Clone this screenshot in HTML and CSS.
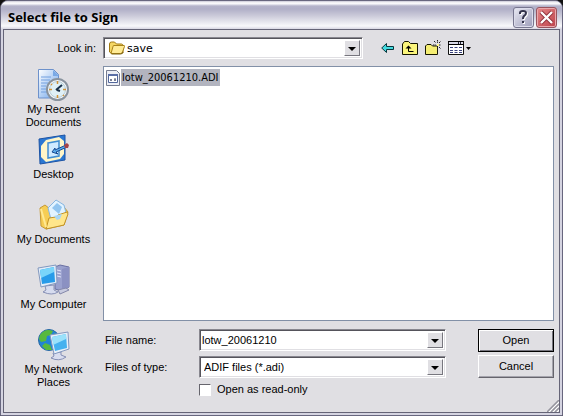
FILE: index.html
```html
<!DOCTYPE html>
<html lang="en">
<head>
<meta charset="utf-8">
<title>Select file to Sign</title>
<link rel="stylesheet" href="styles.css">
</head>
<body>
<div class="window">
  <header class="titlebar">
    <h1>Select file to Sign</h1>
    <button class="caption help" type="button" aria-label="Help">
      <svg width="21" height="21" viewBox="0 0 21 21" fill="none" stroke-width="2"><path d="M8 8V7q0-2 3-2t3 2q0 2-2 3-1 1-1 3M11 15v2" stroke="#fff"/><path d="M7 7V6q0-2 3-2t3 2q0 2-2 3-1 1-1 3M10 14v2" stroke="#34344c"/></svg>
    </button>
    <button class="caption close" type="button" aria-label="Close">
      <svg width="21" height="21" viewBox="0 0 21 21" fill="none"><path d="M5 5l11 11M16 5L5 16" stroke="#8e2f38" stroke-width="4"/><path d="M5 5l11 11M16 5L5 16" stroke="#fff" stroke-width="2.4"/></svg>
    </button>
  </header>
  <form class="dialog">
    <div class="lookrow">
      <label for="look">Look in:</label>
      <div class="combo look">
        <svg class="folder" width="17" height="16" viewBox="0 0 17 16"><path d="M1.5 12V4q0-2 2-2h3l2 2h5q1.500 0 1.500 2v7H3z" fill="#f5d765" stroke="#a17a14"/><path d="M3 13.500L5 6.500q0-1 1-1h10q.8 0 .5 1L14.500 12q-.5 1.500-2 1.500z" fill="#ffeb96" stroke="#aa8218"/><path d="M3.500 14h9q2 0 2.500-2" fill="none" stroke="#7c6312"/></svg>
        <select id="look"><option>save</option></select>
        <span class="arrow"></span>
      </div>
      <div class="tools">
        <button type="button" aria-label="Back"><svg width="14" height="12" viewBox="0 0 14 12"><path d="M.7 6L5.500 1.500V4.500H12.500V7.500H5.500V10.500z" fill="#42dbe0" stroke="#08363c"/></svg></button>
        <button type="button" aria-label="Up one level"><svg width="16" height="14" viewBox="0 0 16 14"><path d="M.5 13.500V3L2.500.5h4L8.500 2.500h7v11z" fill="#fbf57c" stroke="#161600"/><path d="M6.500 6v4.500h5" fill="none" stroke="#000"/><path d="M3.500 7.500L6.500 4.500l3 3z"/></svg></button>
        <button type="button" aria-label="New folder"><svg width="16" height="16" viewBox="0 0 16 16"><path d="M.5 14.500V6L2 4.500h4L7.500 6h5v8.500z" fill="#f5ee73" stroke="#161600"/><path d="M12.500 0v3M12.500 7v3M8 5h3M14 5h2M9 1l2 2M14 3l2-2M14 7l2 2" stroke="#222" stroke-dasharray="1.500 .7"/><path d="M12 4h2v2h-2z" fill="#fff98c"/></svg></button>
        <button type="button" aria-label="View menu"><svg width="24" height="14" viewBox="0 0 24 14"><path d="M.5.500h15v13H.5z" fill="#fff" stroke="#111"/><path d="M0 0h16v1H0zM0 3h16v1H0z"/><path d="M1 1h14v2H1z" fill="#d9d9e6"/><path d="M10 1h1v2h-1zM12 1h1v2h-1z" fill="#223"/><path d="M2 6.500h12M2 9.500h12M2 11.500h12" stroke="#39427c" stroke-dasharray="3 1.500"/><path d="M18 6h5l-2.500 3z"/></svg></button>
      </div>
    </div>
    <div class="main">
      <nav class="places">
        <button type="button"><svg width="32" height="32" viewBox="0 0 32 32"><defs><linearGradient id="page" x2="1" y2="1"><stop stop-color="#fff"/><stop offset="1" stop-color="#6ba3eb"/></linearGradient></defs><path d="M.500.500h15l5 5V29H.500z" fill="url(#page)" stroke="#6d91cb"/><path d="M15 1v6h6z" fill="#79a9e6"/><path d="M3 8h10M3 11h9M3 14h7M3 17h5M3 20h5M3 23h6" stroke="#73a0df"/><circle cx="19.500" cy="20.500" r="10.500" fill="#f5f8fb" stroke="#89939e" stroke-width="2"/><circle cx="19.500" cy="20.500" r="8" fill="#dff0f6" stroke="#b5cbd6"/><path d="M19.500 12v3M19.500 26v3M11 20.500h3M25 20.500h3M13 15l1 1M25 26l1 1" stroke="#d29338" stroke-width="1.500"/><path d="M18 21l6-5M19 21l3 1" stroke="#182f48" stroke-width="2"/></svg><span>My Recent<br>Documents</span></button>
        <button type="button"><svg width="32" height="32" viewBox="0 0 32 32"><path d="M1 5L27 1v25L2 30z" fill="#2b78d3" stroke="#1d54a5"/><path d="M3 12l5-6 13-3 5 4v13l-4 5-14 3-5-5z" fill="#fff6c8"/><path d="M10 9l11-2v15l-11 2z" fill="#cfeaff" stroke="#408dd2" stroke-width="1.500"/><path d="M14 18l3-4v2l11-5 1 2-11 5 2 2z" fill="#5babea" stroke="#164a92"/><path d="M26 11l3-2 2 2-1 3-3 0z" fill="#a54346"/></svg><span>Desktop</span></button>
        <button type="button"><svg width="32" height="32" viewBox="0 0 32 32"><path d="M2 9l5-3 5 4 14-2 4 5-4 13L8 30l-5-3z" fill="#f6cd54" stroke="#c69a35"/><path d="M10 9L18 1l8 5 2 8-14 10z" fill="#e2f3ff" stroke="#86b6e1"/><path d="M14 9l5-5 5 4-3 7z" fill="#91c5f0"/><path d="M8 30L11 19l7-1 2-2 9-3 1 2-4 11z" fill="#ffe68b" stroke="#c39327"/><path d="M16 17l8-2-2 5-3 1z" fill="#a9d6f4"/><path d="M3 10l5 18" stroke="#ffe993" stroke-width="2"/></svg><span>My Documents</span></button>
        <button type="button"><svg width="34" height="32" viewBox="0 0 34 32"><path d="M18 3l5-2 9 2v20l-7 4-7-2z" fill="#9aa1ce" stroke="#696fa2"/><path d="M25 5l7-2v20l-7 4z" fill="#8b91c2"/><path d="M20 6l4 1M20 9l4 1M20 12l4 1" stroke="#e2e5fa"/><path d="M8 22l9-1v5l4 2q-6 4-15 0l3-2z" fill="#d7dcef" stroke="#8790b5"/><path d="M1 4L19 1l1 18L4 23z" fill="#e2edf9" stroke="#8298bf"/><path d="M3 6l14-3 1 15L5 20z" fill="#279be9"/><path d="M3 6l14-3v5L4 14z" fill="#79d5fa"/><path d="M21 26l8-2 3 2-9 4z" fill="#c8cbe0" stroke="#8588aa"/></svg><span>My Computer</span></button>
        <button type="button"><svg width="34" height="32" viewBox="0 0 34 32"><circle cx="12" cy="11" r="10.500" fill="#2183d5" stroke="#2868a2"/><path d="M3 6q5-7 13-4l-2 4-4 1-1 5-5 1-2-3zM8 14l5 2 2 5-6 0-4-4zM17 4l4 4-4 3z" fill="#57b93d"/><path d="M16 24l8-1v3l5 2q-7 5-15 1l3-2z" fill="#d9ddef" stroke="#858fb5"/><path d="M13 6l18-3 1 17-15 5z" fill="#e8f0f9" stroke="#8598bf"/><path d="M15 8l14-3 1 14-12 3z" fill="#45b1ef"/><path d="M15 8l14-3v5l-13 6z" fill="#9ae1fa"/></svg><span>My Network<br>Places</span></button>
      </nav>
      <div class="content">
        <div class="files">
          <button class="file" type="button"><svg width="14" height="16" viewBox="0 0 14 16"><path d="M.5.500h10l3 3v12H.5z" fill="#eceef5" stroke="#777d91"/><path d="M2.500 4.500h9v8h-9z" fill="#fff" stroke="#52679b"/><path d="M2 4h10v2H2z" fill="#5a6ea6"/><path d="M4 10h2M5 9v2M8 10h2M9 8v3" stroke="#4c5572"/></svg><span>lotw_20061210.ADI</span></button>
        </div>
        <div class="bottom">
          <div class="fields">
            <label for="name">File name:</label>
            <div class="combo"><input id="name" type="text" value="lotw_20061210"><button class="arrow" type="button" aria-label="Recent file names"></button></div>
            <label for="type">Files of type:</label>
            <div class="combo type"><select id="type"><option>ADIF files (*.adi)</option></select><span class="arrow"></span></div>
            <label class="readonly"><input type="checkbox">Open as read-only</label>
          </div>
          <div class="actions">
            <button class="push default" type="submit">Open</button>
            <button class="push" type="button">Cancel</button>
          </div>
        </div>
      </div>
    </div>
    <svg class="grip" width="12" height="12" viewBox="0 0 12 12"><path d="M0 12L12 0M4 12l8-8M8 12l4-4" stroke="#95949e" stroke-width="1.500"/><path d="M2 12L12 2M6 12l6-6M10 12l2-2" stroke="#fff"/></svg>
  </form>
</div>
</body>
</html>
```
FILE: styles.css
```css
* { box-sizing: border-box; }
body {
  margin: 0;
  background: #111;
  color: #000;
  font: 11px/13px "Liberation Sans", Arial, sans-serif;
}
button, input, select { font: inherit; color: inherit; }
button { padding: 0; border: 0; background: none; }
svg { display: block; flex: none; }

.window {
  display: flex;
  flex-direction: column;
  min-height: 100vh;
  padding: 0 2px 2px;
  border: 1px solid #68677f;
  border-radius: 8px 8px 0 0;
  background: #d5d4e1;
}
.titlebar {
  display: flex;
  align-items: center;
  gap: 2px;
  height: 28px;
  margin: 0 -2px;
  padding: 4px 5px 0 7px;
  border-radius: 7px 7px 0 0;
  background: linear-gradient(#c8c7d6 0, #fff 2px, #f1f1f6 3px, #b4b3ca 5px, #b0afc7 8px, #cccbda 15px, #f8f8fb 25px, #d8d7e3 28px);
}
h1 {
  flex: 1;
  margin: 0;
  font: bold 13px/20px "Open Sans", "Noto Sans", sans-serif;
}
.caption {
  width: 21px;
  height: 21px;
  border: 1px solid #77768f;
  border-radius: 3px;
  box-shadow: inset 0 0 0 1px #dcdceb;
  background: linear-gradient(135deg, #e9e9f3, #9d9dba);
}
.caption svg { margin: -1px; }
.close {
  border-color: #98545e;
  box-shadow: inset 0 0 0 1px #e9a8ac;
  background: linear-gradient(135deg, #e58a8b, #bd4149);
}

.dialog {
  position: relative;
  flex: 1;
  display: flex;
  flex-direction: column;
  border: 1px solid #656477;
  background: #e0dfe3;
  padding: 7px 5px 16px 0;
}
.lookrow { display: flex; align-items: center; height: 22px; }
.lookrow > label { width: 99px; padding-right: 7px; text-align: right; }
.combo {
  position: relative;
  display: flex;
  min-width: 0;
  height: 22px;
  border: 1px solid;
  border-color: #88878f #fff #fff #88878f;
  box-shadow: inset 1px 1px #55545b, inset -1px -1px #e0dfe3;
  background: #fff;
}
.look {
  flex: 0 1 260px;
  align-items: center;
  padding-left: 4px;
  font: 11px/13px "DejaVu Sans", sans-serif;
}
.combo select, .combo input {
  flex: 1;
  min-width: 0;
  appearance: none;
  border: 0;
  outline: 0;
  background: none;
  padding: 0 18px 0 2px;
}
.type select { padding-left: 4px; }
.arrow {
  position: absolute;
  top: 2px;
  right: 2px;
  bottom: 2px;
  width: 16px;
  border: 1px solid;
  border-color: #fff #77767e #77767e #fff;
  background: #e0dfe3;
  pointer-events: none;
}
button.arrow { pointer-events: auto; }
.arrow::after {
  content: "";
  position: absolute;
  top: 6px;
  left: 3px;
  border: solid transparent;
  border-width: 4px 4px 0;
  border-top-color: #000;
}
.tools { display: flex; align-items: center; gap: 7px; margin-left: 18px; }

.main { flex: 1; display: flex; margin-top: 7px; }
.places { display: flex; flex-direction: column; width: 99px; padding-top: 3px; }
.places button {
  display: flex;
  flex-direction: column;
  align-items: center;
  gap: 2px;
  height: 65px;
}
.places button:last-child { height: 60px; }
.content { flex: 1; min-width: 0; display: flex; flex-direction: column; }
.files { flex: 1; border: 1px solid #8290a7; background: #fff; padding: 2px; }
.file {
  display: flex;
  align-items: center;
  gap: 1px;
  font: 11px/17px "DejaVu Sans Condensed", "DejaVu Sans", sans-serif;
}
.file span { padding: 0 1px; background: #b2b4bf; }
.bottom { display: flex; justify-content: space-between; gap: 32px; margin-top: 8px; }
.fields {
  flex: 1;
  display: grid;
  grid-template-columns: 96px minmax(0, 1fr);
  row-gap: 5px;
  align-items: center;
}
.fields > label { padding-left: 2px; }
.fields .readonly {
  grid-column: 2;
  display: flex;
  align-items: center;
  gap: 6px;
  padding: 0;
}
.readonly input {
  appearance: none;
  width: 12px;
  height: 12px;
  margin: 0;
  border: 1px solid;
  border-color: #66656d #fff #fff #66656d;
  background: #fff;
}
.actions { display: flex; flex-direction: column; gap: 3px; width: 76px; }
.push {
  height: 23px;
  border: 1px solid;
  border-color: #fff #66656d #66656d #fff;
  box-shadow: inset -1px -1px #a5a4ad;
  background: #e0dfe3;
}
.default { border-color: #000; box-shadow: inset 1px 1px #fff, inset -1px -1px #77767f; }
.grip { position: absolute; right: 0; bottom: 0; }
```
